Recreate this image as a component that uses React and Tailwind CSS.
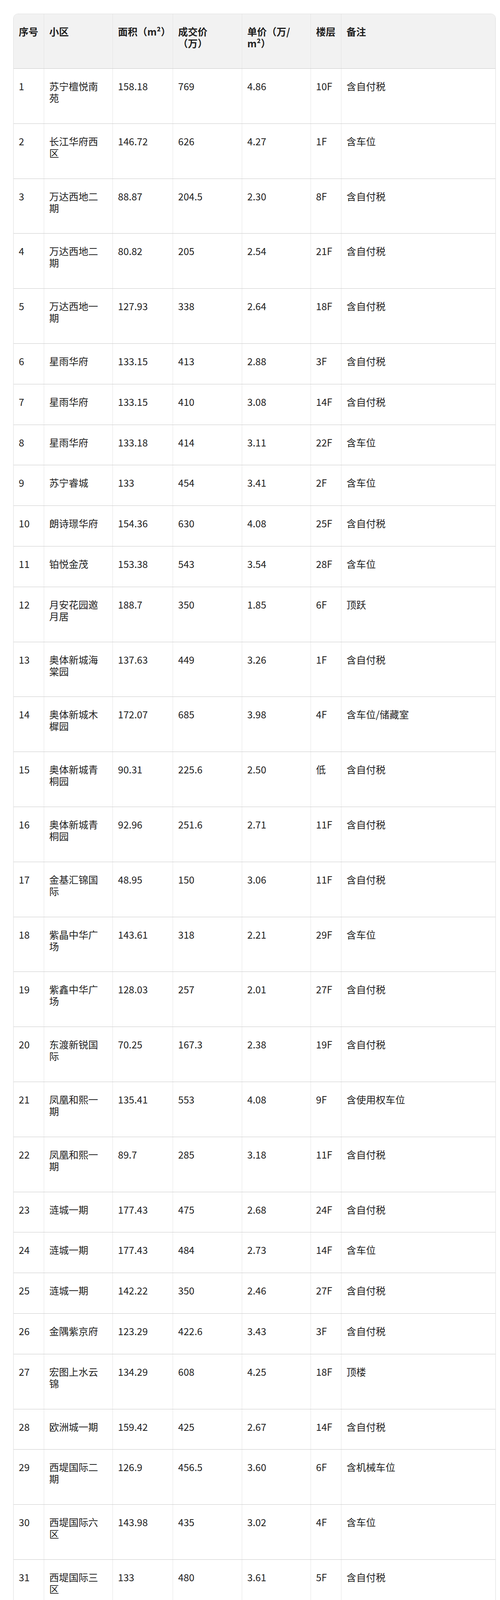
import React from 'react';

const rows = [
  [1, '苏宁檀悦南苑', '158.18', '769', '4.86', '10F', '含自付税'],
  [2, '长江华府西区', '146.72', '626', '4.27', '1F', '含车位'],
  [3, '万达西地二期', '88.87', '204.5', '2.30', '8F', '含自付税'],
  [4, '万达西地二期', '80.82', '205', '2.54', '21F', '含自付税'],
  [5, '万达西地一期', '127.93', '338', '2.64', '18F', '含自付税'],
  [6, '星雨华府', '133.15', '413', '2.88', '3F', '含自付税'],
  [7, '星雨华府', '133.15', '410', '3.08', '14F', '含自付税'],
  [8, '星雨华府', '133.18', '414', '3.11', '22F', '含车位'],
  [9, '苏宁睿城', '133', '454', '3.41', '2F', '含车位'],
  [10, '朗诗璟华府', '154.36', '630', '4.08', '25F', '含自付税'],
  [11, '铂悦金茂', '153.38', '543', '3.54', '28F', '含车位'],
  [12, '月安花园邀月居', '188.7', '350', '1.85', '6F', '顶跃'],
  [13, '奥体新城海棠园', '137.63', '449', '3.26', '1F', '含自付税'],
  [14, '奥体新城木樨园', '172.07', '685', '3.98', '4F', '含车位/储藏室'],
  [15, '奥体新城青桐园', '90.31', '225.6', '2.50', '低', '含自付税'],
  [16, '奥体新城青桐园', '92.96', '251.6', '2.71', '11F', '含自付税'],
  [17, '金基汇锦国际', '48.95', '150', '3.06', '11F', '含自付税'],
  [18, '紫晶中华广场', '143.61', '318', '2.21', '29F', '含车位'],
  [19, '紫鑫中华广场', '128.03', '257', '2.01', '27F', '含自付税'],
  [20, '东渡新锐国际', '70.25', '167.3', '2.38', '19F', '含自付税'],
  [21, '凤凰和熙一期', '135.41', '553', '4.08', '9F', '含使用权车位'],
  [22, '凤凰和熙一期', '89.7', '285', '3.18', '11F', '含自付税'],
  [23, '涟城一期', '177.43', '475', '2.68', '24F', '含自付税'],
  [24, '涟城一期', '177.43', '484', '2.73', '14F', '含车位'],
  [25, '涟城一期', '142.22', '350', '2.46', '27F', '含自付税'],
  [26, '金隅紫京府', '123.29', '422.6', '3.43', '3F', '含自付税'],
  [27, '宏图上水云锦', '134.29', '608', '4.25', '18F', '顶楼'],
  [28, '欧洲城一期', '159.42', '425', '2.67', '14F', '含自付税'],
  [29, '西堤国际二期', '126.9', '456.5', '3.60', '6F', '含机械车位'],
  [30, '西堤国际六区', '143.98', '435', '3.02', '4F', '含车位'],
  [31, '西堤国际三区', '133', '480', '3.61', '5F', '含自付税'],
  [32, '西堤国际三区', '129.3', '483', '3.74', '14F', '含2机械车位'],
  [33, '颐和源璟A区', '143.47', '723.9', '5.05', '14F', '含自付税'],
  [34, '颐和源璟A区', '143.47', '728', '5.07', '21F', '含自付税'],
  [35, '颐和源璟B区', '143', '744.6', '5.21', '9F', '含车位/二次装修'],
  [36, '紫金西区中央', '46.9', '161.5', '3.44', '18F', '含自付税'],
  [37, '嘉业国际城', '59.82', '140', '2.34', '20F', '含自付税'],
  [38, '嘉业国际城', '62.05', '152.6', '2.46', '22F', '含自付税'],
  [39, '拉德芳斯北苑', '137.92', '394.8', '2.86', '13F', '含自付税'],
  [40, '拉德芳斯南苑', '115.3', '332.5', '2.88', '5F', '含自付税'],
  [41, '拉德芳斯南苑', '75.62', '315', '4.17', '18F', '顶跃'],
  [42, '中泰国际广场', '140.73', '215', '1.53', '21F', '含自付税'],
  [43, '华新城二期', '136.92', '650', '4.75', '3F', '含自付税'],
  [44, '华新城一期', '110.79', '423', '3.82', '13F', '含车位'],
  [45, '融侨中央花园', '108.82', '305', '2.80', '21F', '含自付税'],
  [46, '江湾城一期', '152.9', '513', '3.36', '低', '含自付税'],
  [47, '江湾城三期', '235', '1048', '4.46', '17F', '含车位'],
  [48, '江湾城四期', '250.32', '1220', '4.87', '4F', '含车位'],
  [49, '金马郦城东区', '103.84', '410', '3.95', '1F', '大院子'],
  [50, '金马郦城西区', '190.07', '495', '2.60', '4F', '顶跃/含车位'],
  [51, '朗诗国际街区北园', '104', '243.8', '2.34', '3F', '含自付税'],
  [52, '美丽嘉园', '128.57', '308', '2.40', '6F', '含自付税'],
  [53, '仁恒G53', '78.6', '287', '3.65', '16F', '含车位'],
  [54, '宋都美域沁园', '174.84', '532', '3.04', '18F', '顶跃'],
  [55, '中北品尚', '87.29', '235', '2.69', '17F', '含自付税'],
  [56, '中和园', '88.81', '168', '1.89', '14F', '含自付税'],
  [57, '钟鼎雅居', '82.8', '187', '2.26', '4F', '含自付税'],
  [58, '金沙雅轩', '101.12', '338', '3.34', '6F', '含车位'],
  [59, '保利香槟国际', '141.84', '439', '3.10', '8F', '含自付税'],
  [60, '保利香槟国际', '141.08', '439.6', '3.12', '8F', '含自付税'],
];

// names longer than ~5 CJK chars wrap to a second line in the 小区 column
const wraps = name => [...name].reduce((w, c) => w + (c.charCodeAt(0) > 255 ? 25 : 14), 0) > 146;

const widths = ['w-[77px]', 'w-[176px]', 'w-[154px]', 'w-[177px]', 'w-[176px]', 'w-[78px]', 'flex-1'];

function Cell({ i, children }) {
  return (
    <div className={`${widths[i]} shrink-0 min-w-0 pt-[29px] pl-[13px] ${i === 1 ? 'pr-[16px]' : 'pr-[6px]'} ${i > 0 ? 'border-l border-[#e4e4e4]' : ''}`}>
      {children}
    </div>
  );
}

export default function App() {
  const head = ['序号', '小区', '面积（m²）', <>成交价<br />（万）</>, <>单价（万/<br />m²）</>, '楼层', '备注'];
  return (
    <div className="bg-white pt-[35px] pl-[34px] font-['Noto_Sans_CJK_SC','Noto_Sans',sans-serif] text-[25px] leading-[30px] text-[#222]">
      <div className="w-[1235px] rounded-[12px] border border-[#dedede] overflow-hidden shadow-[0_1px_2px_rgba(0,0,0,0.06)]">
        {/* Header */}
        <div className="flex h-[139px] bg-[#f2f2f2] font-bold text-[#1f1f1f] whitespace-nowrap">
          {head.map((h, i) => <Cell key={i} i={i}>{h}</Cell>)}
        </div>

        {/* Rows */}
        {rows.map(r => (
          <div key={r[0]} className={`flex border-t border-[#c9c9c9] ${wraps(r[1]) ? 'h-[140.8px]' : 'h-[103.8px]'}`}>
            {r.map((v, i) => <Cell key={i} i={i}>{v}</Cell>)}
          </div>
        ))}
      </div>

      {/* faint floating shadow under the last column */}
      <div className="ml-[838px] mt-[6px] w-[377px] h-[40px] bg-gradient-to-b from-[#ececec] to-white blur-[3px]">
        <div className="pt-[8px]">
          <div className="h-[2px] w-[340px] ml-[30px] bg-[#d6d6d6]" />
        </div>
      </div>
    </div>
  );
}
